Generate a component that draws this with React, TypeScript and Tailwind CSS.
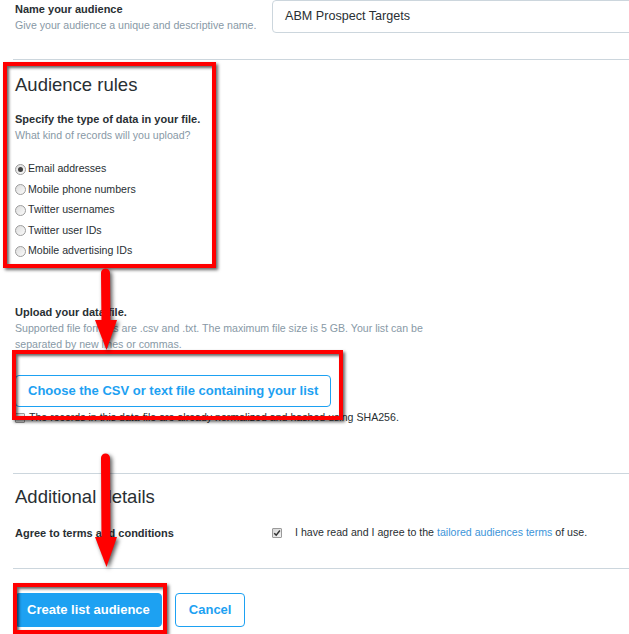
import React from "react";

const dataTypes = [
  "Email addresses",
  "Mobile phone numbers",
  "Twitter usernames",
  "Twitter user IDs",
  "Mobile advertising IDs",
];

function Radio({ checked }: { checked?: boolean }) {
  return (
    <span className="mr-[2px] flex h-[11px] w-[11px] shrink-0 items-center justify-center rounded-full border border-[#9c9c9c] bg-gradient-to-br from-[#dcdcdc] to-[#fbfbfb]">
      {checked && <span className="h-[5px] w-[5px] rounded-full bg-[#404040]" />}
    </span>
  );
}

function Checkbox({ checked }: { checked?: boolean }) {
  return (
    <span className="flex h-[10px] w-[10px] shrink-0 items-center justify-center rounded-[1px] border border-[#9a9a9a] bg-gradient-to-br from-[#d6d6d6] to-[#f4f4f4]">
      {checked && (
        <svg viewBox="0 0 10 10" className="h-[8px] w-[8px]">
          <path d="M1.5 5.2 L4 7.6 L8.6 1.8" fill="none" stroke="#333" strokeWidth="1.8" />
        </svg>
      )}
    </span>
  );
}

function Divider({ className }: { className: string }) {
  return <div className={"border-t border-[#ccd6dd] " + className} />;
}

// red annotation arrow (drawn on top of the form)
function Arrow({ left, top, length }: { left: number; top: number; length: number }) {
  const headTop = length - 30;
  return (
    <svg
      width="30"
      height={length + 2}
      className="pointer-events-none absolute drop-shadow-[2px_2px_2px_rgba(0,0,0,0.65)]"
      style={{ left, top }}
    >
      <line x1="13.5" y1="5" x2="14" y2={headTop + 4} stroke="#ff0000" strokeWidth="9" strokeLinecap="round" />
      <polygon points={`3,${headTop} 25,${headTop} 14.5,${length}`} fill="#ff0000" />
    </svg>
  );
}

export default function App() {
  return (
    <div className="relative h-[634px] w-[629px] overflow-hidden bg-white font-['Liberation_Sans',Arial,sans-serif] text-[#292f33]">
      <div className="pl-[13px]">
        {/* Name */}
        <div className="flex h-[33px]">
          <div className="w-[259px] shrink-0 whitespace-nowrap pl-[2px] pt-[1px]">
            <p className="text-[11px] font-bold leading-4">Name your audience</p>
            <p className="text-[10.6px] leading-4 text-[#8899a6]">Give your audience a unique and descriptive name.</p>
          </div>
          <div className="flex h-[33px] w-[380px] shrink-0 items-center rounded border border-[#ccd6dd] px-3 text-[12.6px]">
            ABM Prospect Targets
          </div>
        </div>

        <Divider className="mt-[26px]" />

        {/* Audience rules */}
        <div className="pl-[2px]">
          <h2 className="mt-[14px] text-[18.5px] leading-[22px]">Audience rules</h2>
          <p className="mt-[15px] text-[11px] font-bold leading-4">Specify the type of data in your file.</p>
          <p className="text-[10.6px] leading-4 text-[#8899a6]">What kind of records will you upload?</p>

          <div className="mt-4 flex flex-col">
            {dataTypes.map((t, i) => (
              <label key={t} className="flex h-[20.5px] items-center text-[10.6px]">
                <Radio checked={i === 0} />
                <span>{t}</span>
              </label>
            ))}
          </div>

          <p className="mt-[42.5px] text-[11px] font-bold leading-4">Upload your data file.</p>
          <p className="w-[430px] text-[10.6px] leading-4 text-[#8899a6]">
            Supported file formats are .csv and .txt. The maximum file size is 5 GB. Your list can be separated by new lines or commas.
          </p>

          <button className="mt-[23px] h-8 rounded border border-[#1da1f2] bg-white px-3 text-[13px] font-bold text-[#1da1f2]">
            Choose the CSV or text file containing your list
          </button>

          <label className="mt-[3px] flex h-4 items-center gap-1 text-[10.6px]">
            <Checkbox />
            <span>The records in this data file are already normalized and hashed using SHA256.</span>
          </label>
        </div>

        <Divider className="mt-[47px]" />

        {/* Additional details */}
        <div className="pl-[2px]">
          <h2 className="mt-[12px] text-[18.5px] leading-[22px]">Additional details</h2>
          <div className="mt-[17px] flex h-4 items-center">
            <span className="w-[257px] shrink-0 text-[11px] font-bold">Agree to terms and conditions</span>
            <Checkbox checked />
            <span className="ml-[13px] text-[10.6px]">
              I have read and I agree to the <a className="text-[#3b94d9]">tailored audiences terms</a> of use.
            </span>
          </div>
        </div>

        <Divider className="mt-[27px]" />

        <div className="mt-6 flex gap-[13px] pl-[2px]">
          <button className="h-[34px] rounded border border-[#1da1f2] bg-[#1da1f2] px-[11px] text-[13px] font-bold text-white">
            Create list audience
          </button>
          <button className="h-[34px] rounded border border-[#1da1f2] bg-white px-[13px] text-[13px] font-bold text-[#1da1f2]">
            Cancel
          </button>
        </div>
      </div>

      {/* annotations */}
      <div className="pointer-events-none absolute left-[3px] top-[62px] h-[206px] w-[213px] border-4 border-[#ff0000] shadow-[2px_2px_3px_rgba(0,0,0,0.6),inset_2px_2px_3px_rgba(0,0,0,0.6)]" />
      <div className="pointer-events-none absolute left-[12px] top-[350px] h-[70px] w-[331px] border-4 border-[#ff0000] shadow-[2px_2px_3px_rgba(0,0,0,0.6),inset_2px_2px_3px_rgba(0,0,0,0.6)]" />
      <div className="pointer-events-none absolute left-[13px] top-[583px] h-[51px] w-[154px] border-4 border-[#ff0000] shadow-[2px_2px_3px_rgba(0,0,0,0.6),inset_2px_2px_3px_rgba(0,0,0,0.6)]" />
      <Arrow left={92} top={268} length={82} />
      <Arrow left={92} top={453} length={114} />
    </div>
  );
}
